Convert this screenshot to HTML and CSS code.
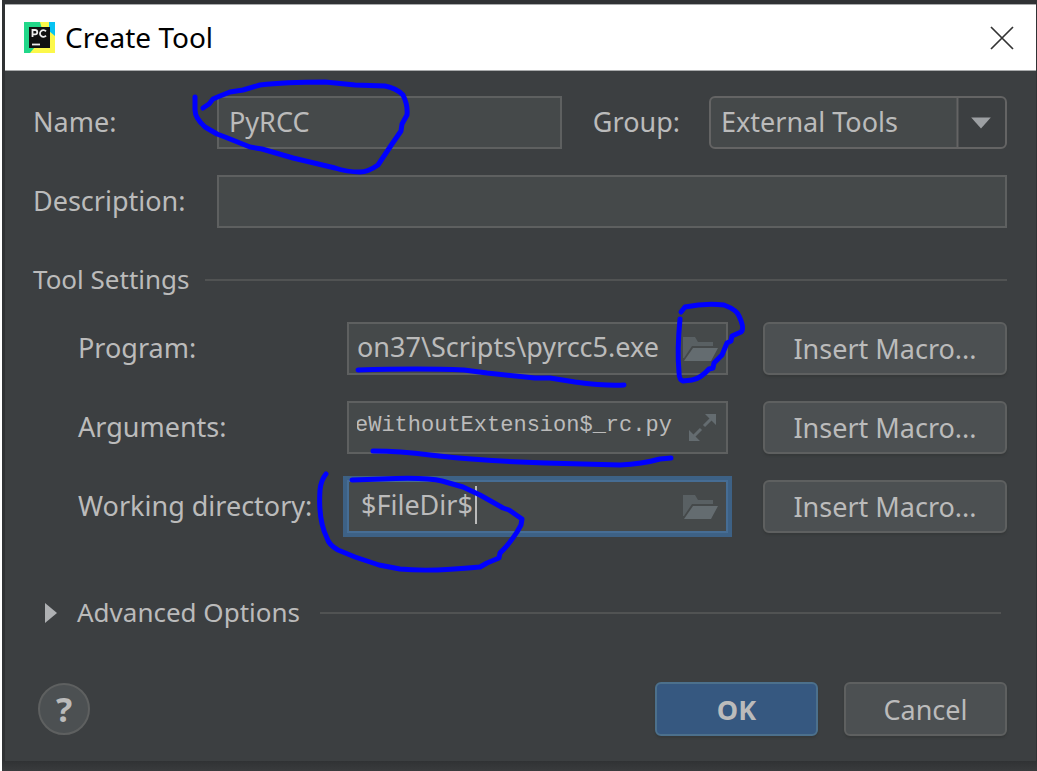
FILE: index.html
```html
<!DOCTYPE html>
<html lang="en">
<head>
<meta charset="utf-8">
<title>Create Tool</title>
<link rel="stylesheet" href="styles.css">
</head>
<body>
<main class="dialog">
  <header class="titlebar">
    <svg class="app-icon" viewBox="0 0 32 32" aria-hidden="true">
      <rect width="31" height="31" x="0" y="0" fill="#21d789"/>
      <path d="M16 0H25L31 13V31H6L20 14Z" fill="#fcf84a"/>
      <path d="M25 0H31V14L25 9Z" fill="#07c3f2"/>
      <rect x="5" y="5" width="21" height="21" fill="#111"/>
      <path d="M8.500 15V8h2.600a2.100 2.100 0 0 1 0 4.300H8.500M22 9.300a3.400 3.400 0 1 0 0 4.400" fill="none" stroke="#eee" stroke-width="1.800"/>
      <path d="M8 22.500h8" stroke="#eee" stroke-width="1.800"/>
    </svg>
    <h1 class="title">Create Tool</h1>
    <button class="close" aria-label="Close"><svg viewBox="0 0 24 24" width="24" height="24"><path d="M1 1L23 23M23 1L1 23" stroke="#333" stroke-width="1.700" fill="none"/></svg></button>
  </header>
  <form class="body">
    <div class="row">
      <label class="label main" for="name">Name:</label>
      <input class="field" id="name" type="text" value="PyRCC">
      <label class="label group" for="group">Group:</label>
      <div class="combo">
        <select id="group"><option>External Tools</option></select>
        <svg class="arrow" viewBox="0 0 50 50" aria-hidden="true"><path d="M1 0V50" stroke="#646464" stroke-width="2"/><path d="M15 20H35L25 31Z" fill="#9da0a3"/></svg>
      </div>
    </div>
    <div class="row">
      <label class="label main" for="description">Description:</label>
      <input class="field" id="description" type="text">
    </div>
    <h2 class="section">Tool Settings</h2>
    <div class="settings">
      <div class="row">
        <label class="label sub" for="program">Program:</label>
        <div class="browse">
          <input class="field" id="program" type="text" value="on37\Scripts\pyrcc5.exe">
          <button type="button" class="tool" aria-label="Browse for program"><svg viewBox="0 0 35 26" width="35" height="26"><path d="M0 1H12L15 6H30V10H9L1 22H0Z" fill="#596063"/><path d="M10 12H35L28 25H1Z" fill="#646c70"/></svg></button>
        </div>
        <button type="button" class="button macro">Insert Macro...</button>
      </div>
      <div class="row">
        <label class="label sub" for="arguments">Arguments:</label>
        <div class="browse">
          <input class="field code" id="arguments" type="text" value="eWithoutExtension$_rc.py">
          <button type="button" class="tool" aria-label="Expand arguments"><svg viewBox="0 0 35 30" width="35" height="30"><path d="M22 1H33V12ZM6 17V28H17Z" fill="#646c70"/><path d="M21 13L29 5M10 24L18 16" stroke="#646c70" stroke-width="3"/></svg></button>
        </div>
        <button type="button" class="button macro">Insert Macro...</button>
      </div>
      <div class="row">
        <label class="label sub" for="directory">Working directory:</label>
        <div class="browse active">
          <input class="field" id="directory" type="text" value="$FileDir$">
          <span class="caret"></span>
          <button type="button" class="tool" aria-label="Browse for directory"><svg viewBox="0 0 35 26" width="35" height="26"><path d="M0 1H12L15 6H30V10H9L1 22H0Z" fill="#596063"/><path d="M10 12H35L28 25H1Z" fill="#646c70"/></svg></button>
        </div>
        <button type="button" class="button macro">Insert Macro...</button>
      </div>
    </div>
    <button type="button" class="section advanced" aria-expanded="false"><svg viewBox="0 0 12 20" width="12" height="20"><path d="M0 0L12 10L0 20Z" fill="#afb1b3"/></svg>Advanced Options</button>
    <footer class="footer">
      <button type="button" class="help" aria-label="Help">?</button>
      <button type="submit" class="button ok">OK</button>
      <button type="button" class="button cancel">Cancel</button>
    </footer>
  </form>
</main>
<svg class="ink" viewBox="0 0 1037 771" width="1037" height="771" aria-hidden="true">
  <path d="M203 108L209 104L213 99L220 96L230 92L243 90L260 85Q285 82 325 82L355 85L385 86Q396 88 403 95Q408 105 407 115L402 124L401 131L392 144L378 165Q368 172 360 172Q347 172 335 168L293 158L262 149L250 147L225 137L217 134L205 127Q195 118 195 110V97"/>
  <path d="M681 312L685 307Q705 303 724 305Q737 310 739 316Q745 329 741 332L732 336L731 341L727 343L722 355L714 363L713 368L709 369Q700 379 692 380L683 381Q679 380 679 372Q677 350 680 319"/>
  <path d="M358 370Q420 368 464 370L487 373L535 378H550L575 382Q605 386 624 385"/>
  <path d="M373 451Q400 451 430 455Q480 461 545 463L620 465Q642 464 660 459L671 458"/>
  <path d="M352 480L382 479Q425 477 442 481L463 487L480 495L503 508L509 510L522 519L521 525L517 532Q508 546 500 553L499 558L487 563L480 567Q430 572 400 569L379 565L355 557L338 550Q329 545 327 538Q318 520 320 490Q321 480 326 474"/>
</svg>
<script src="script.js"></script>
</body>
</html>
```
FILE: script.js
```js
const args = document.getElementById("arguments");
args.scrollLeft = args.scrollWidth;
```
FILE: styles.css
```css
* { box-sizing: border-box; }
body {
  position: relative;
  margin: 0;
  min-height: 100vh;
  padding: 4px 1px 10px 3px;
  border-left: 2px solid #fff;
  background: linear-gradient(0deg, #393b3d, #303234 10px);
  color: #bbb;
  font-family: "Noto Sans", "Open Sans", sans-serif;
  font-size: 27px;
}
button, input, select { font: inherit; color: inherit; }
.dialog { background: #3c3f41; min-height: calc(100vh - 14px); }
.titlebar {
  display: flex;
  align-items: center;
  height: 67px;
  padding: 0 22px 0 19px;
  border: 1px solid #a9abac;
  border-width: 1px 0;
  background: #fff;
  color: #000;
}
.app-icon { width: 32px; height: 32px; }
.title { flex: 1; margin: 0 0 0 9px; font-size: 28px; line-height: 36px; padding-bottom: 2px; font-weight: 400; }
.close { display: flex; padding: 0; border: 0; background: none; }
.body { padding: 25px 29px 24px 28px; }
.row { display: flex; align-items: center; margin-bottom: 26px; }
.label { flex: none; padding-bottom: 2px; white-space: nowrap; }
.main { width: 184px; }
.sub { width: 269px; }
.group { margin: 0 29px 0 31px; }
.field {
  flex: 1;
  min-width: 0;
  width: 100%;
  height: 53px;
  padding: 0 10px 2px;
  border: 2px solid #5e6060;
  border-radius: 0;
  background: #45494a;
  outline: 0;
}
.combo { position: relative; width: 298px; }
.combo select {
  display: block;
  width: 100%;
  height: 53px;
  padding: 0 54px 2px 10px;
  border: 2px solid #646464;
  border-radius: 6px;
  appearance: none;
  background: linear-gradient(90deg, #45494a calc(100% - 48px), #3c3f41 0);
}
.arrow { position: absolute; top: 2px; right: 1px; width: 50px; height: 49px; }
.section {
  display: flex;
  align-items: center;
  gap: 15px;
  margin: 0 0 21px;
  font-size: 26px;
  font-weight: 400;
  line-height: 43px;
}
.section::after { content: ""; flex: 1; height: 2px; background: #515353; }
.row + .section { margin-top: 30px; }
.settings { padding-left: 45px; }
.browse { position: relative; flex: 1; min-width: 0; }
.browse .field { display: block; padding: 0 50px 4px 8px; }
.browse .code { padding-right: 54px; font-family: "Liberation Mono", monospace; font-size: 22px; }
.active .field {
  padding-left: 12px;
  border-color: #466d94;
  box-shadow: 0 0 0 4px #3d6185;
}
.caret { position: absolute; top: 6px; left: 128px; width: 2px; height: 38px; background: #bbb; }
.tool { position: absolute; top: 0; right: 10px; display: flex; align-items: center; height: 53px; padding: 0; border: 0; background: none; }
.button {
  height: 54px;
  padding: 0;
  border: 2px solid #5e6060;
  border-radius: 6px;
  background: #4c5052;
  box-shadow: 0 2px 2px #36393a;
}
.macro { width: 244px; margin-left: 35px; height: 53px; }
.advanced {
  width: 100%;
  margin-top: 58px;
  padding: 0 6px 0 12px;
  border: 0;
  background: none;
  gap: 20px;
}
.footer { display: flex; align-items: center; margin-top: 48px; padding-left: 5px; }
.help {
  width: 52px;
  height: 52px;
  margin-right: auto;
  padding: 0;
  border: 2px solid #5e6060;
  border-radius: 50%;
  background: #4c5052;
  font-size: 34px;
  font-weight: 700;
  line-height: 44px;
}
.ok { width: 163px; border-color: #4c708c; background: #365880; font-weight: 700; }
.cancel { width: 163px; margin-left: 26px; }
.ink {
  position: absolute;
  top: 0;
  left: -2px;
  pointer-events: none;
  fill: none;
  stroke: #00f;
  stroke-width: 5;
  stroke-linecap: round;
  stroke-linejoin: round;
}
```
